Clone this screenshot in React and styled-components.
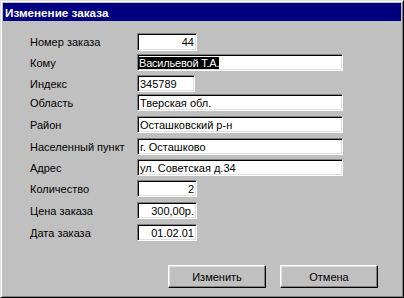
import React from 'react'
import styled, {createGlobalStyle} from 'styled-components'

const GlobalStyle = createGlobalStyle`
    html, body {
        margin: 0;
        padding: 0;
        background: #c0c0c0;
    }
    * {
        box-sizing: border-box;
    }
`

const Window = styled.div`
    width: 404px;
    height: 298px;
    display: flex;
    flex-direction: column;
    padding: 3px;
    background: #c0c0c0;
    border: 1px solid;
    border-color: #dfdfdf #000 #000 #dfdfdf;
    box-shadow: inset 1px 1px #fff, inset -1px -1px #808080;
    font-family: "Liberation Sans", Arial, sans-serif;
    font-size: 11px;
    color: #000;
`

const TitleBar = styled.div`
    height: 18px;
    margin: -1px -1px 0 -1px;
    display: flex;
    align-items: center;
    padding-left: 2px;
    background: #000080;
    color: #fff;
    font-weight: bold;
    font-size: 11.7px;
`

const Form = styled.div`
    display: flex;
    flex-direction: column;
    padding: 12px 0 0 26px;
`

const Row = styled.div`
    display: flex;
    align-items: center;
    height: 17px;
    margin-top: ${props => props.$gap}px;
`

const Label = styled.div`
    width: 107px;
    flex: none;
    white-space: nowrap;
`

const Field = styled.div`
    width: ${props => props.$width}px;
    height: ${props => props.$height || 17}px;
    display: flex;
    align-items: center;
    justify-content: ${props => props.$right ? 'flex-end' : 'flex-start'};
    padding: 0 2px 0 2px;
    background: #fff;
    border: 1px solid;
    border-color: #808080 #fff #fff #808080;
    box-shadow: inset 1px 1px #000, inset -1px -1px #dfdfdf;
    white-space: nowrap;
    overflow: hidden;
    font-size: 11px;
`

const Selected = styled.span`
    background: #000;
    color: #fff;
    margin-left: -1px;
    letter-spacing: -0.2px;
`

const ButtonRow = styled.div`
    display: flex;
    justify-content: flex-end;
    gap: 14px;
    margin-top: 24px;
    padding-right: 22px;
`

const Button = styled.div`
    width: 98px;
    height: 23px;
    display: flex;
    align-items: center;
    justify-content: center;
    background: #c0c0c0;
    border: 1px solid;
    border-color: #fff #000 #000 #fff;
    box-shadow: inset -1px -1px #808080, inset 1px 1px #dfdfdf;
    font-size: 11px;
`

const rows = [
    {label: 'Номер заказа', value: '44', width: 60, right: true, gap: 0, height: 18},
    {label: 'Кому', value: 'Васильевой Т.А.', width: 206, selected: true, gap: 4},
    {label: 'Индекс', value: '345789', width: 58, gap: 4},
    {label: 'Область', value: 'Тверская обл.', width: 206, gap: 2},
    {label: 'Район', value: 'Осташковский р-н', width: 206, gap: 5},
    {label: 'Населенный пункт', value: 'г. Осташково', width: 206, gap: 5},
    {label: 'Адрес', value: 'ул. Советская д.34', width: 206, gap: 4},
    {label: 'Количество', value: '2', width: 60, right: true, gap: 4},
    {label: 'Цена заказа', value: '300,00р.', width: 60, right: true, gap: 5},
    {label: 'Дата заказа', value: '01.02.01', width: 60, right: true, gap: 5},
]

const App = () => {
    return (
        <>
            <GlobalStyle />
            <Window>
                <TitleBar>Изменение заказа</TitleBar>
                <Form>
                    {rows.map(row => (
                        <Row key={row.label} $gap={row.gap}>
                            <Label>{row.label}</Label>
                            <Field $width={row.width} $right={row.right} $height={row.height}>
                                {row.selected ? <Selected>{row.value}</Selected> : row.value}
                            </Field>
                        </Row>
                    ))}
                </Form>
                <ButtonRow>
                    <Button>Изменить</Button>
                    <Button>Отмена</Button>
                </ButtonRow>
            </Window>
        </>
    )
}

export default App
